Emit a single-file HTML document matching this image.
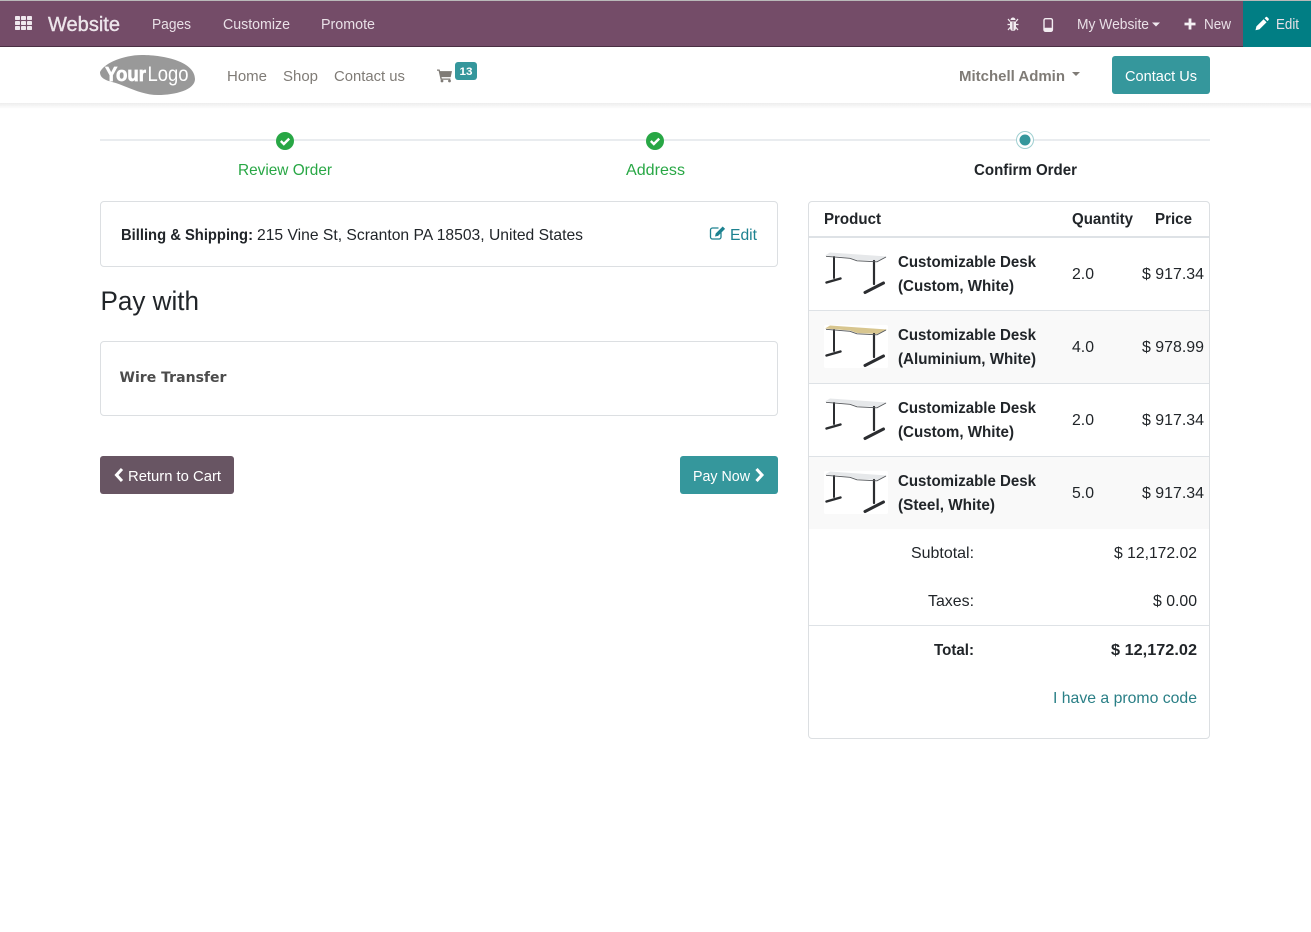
<!DOCTYPE html>
<html lang="en">
<head>
<meta charset="utf-8">
<title>Confirm Order</title>
<style>
html,body{margin:0;padding:0;background:#fff;width:1311px;height:932px;overflow:hidden}
svg{display:block}
text{font-family:"Liberation Sans",sans-serif;font-size:16px;fill:#212529}
.b{font-weight:bold}
.top{font-size:14.5px;fill:#e9e0e7}
.nav{font-size:15px;fill:#7f7b76}
.wt{fill:#fff;font-size:15px}
</style>
</head>
<body>
<svg width="1311" height="932" viewBox="0 0 1311 932" xmlns="http://www.w3.org/2000/svg">
<defs>
<linearGradient id="sh" x1="0" y1="0" x2="0" y2="1"><stop offset="0" stop-color="#000" stop-opacity=".07"/><stop offset="1" stop-color="#000" stop-opacity="0"/></linearGradient>
<g id="legs" fill="none" stroke="#2b2d30" stroke-linecap="round">
<path d="M834 257V278" stroke-width="2"/>
<path d="M826.5 282.500L840.500 278.500" stroke-width="2.400"/>
<path d="M874 261V284" stroke-width="2.200"/>
<path d="M865 292.500L883.500 283" stroke-width="3"/>
<path d="M826 256.300L850 258.300L857 260.800L877 261.800L886 257" stroke="#55585c" stroke-width=".9" stroke-linecap="butt"/>
</g>
<path id="top" d="M825 255.500L830 252.500L887 256.500L877 261L857 260L850 257.500Z"/>
</defs>

<!-- top bar -->
<rect x="0" y="0" width="1311" height="47" fill="#744c68"/>
<rect x="0" y="0" width="1311" height="1" fill="#b9b9b9"/>
<rect x="0" y="46" width="1311" height="1" fill="#4a3043"/>
<rect x="1243" y="1" width="68" height="46" fill="#017e84"/>
<g fill="#efe8ee">
<rect x="15" y="16" width="5" height="4" rx=".8"/><rect x="21" y="16" width="5" height="4" rx=".8"/><rect x="27" y="16" width="5" height="4" rx=".8"/>
<rect x="15" y="21" width="5" height="4" rx=".8"/><rect x="21" y="21" width="5" height="4" rx=".8"/><rect x="27" y="21" width="5" height="4" rx=".8"/>
<rect x="15" y="26" width="5" height="4" rx=".8"/><rect x="21" y="26" width="5" height="4" rx=".8"/><rect x="27" y="26" width="5" height="4" rx=".8"/>
</g>
<text x="48" y="31" style="font-size:20px;fill:#ece5eb;stroke:#ece5eb;stroke-width:.4" textLength="72" lengthAdjust="spacingAndGlyphs">Website</text>
<text x="152" y="29" class="top" textLength="39" lengthAdjust="spacingAndGlyphs">Pages</text>
<text x="223" y="29" class="top" textLength="67" lengthAdjust="spacingAndGlyphs">Customize</text>
<text x="321" y="29" class="top" textLength="54" lengthAdjust="spacingAndGlyphs">Promote</text>
<!-- bug -->
<g fill="#f2ecf1" stroke="#f2ecf1">
<path d="M1010 21.500h6v6.500a3 3 0 0 1-6 0z" stroke="none"/>
<path d="M1010.500 20a2.500 2.500 0 0 1 5 0z" stroke="none"/>
<path d="M1008 19l2 2.500M1018 19l-2 2.500M1007.500 24.500h2.500M1016 24.500h2.500M1008 30l2-2.500M1018 30l-2-2.500" fill="none" stroke-width="1.200"/>
</g>
<path d="M1013 22v8.500" stroke="#744c68" stroke-width=".8"/>
<!-- mobile -->
<rect x="1044" y="18.700" width="8.400" height="12.600" rx="1.600" fill="none" stroke="#f2ecf1" stroke-width="1.400"/>
<rect x="1044" y="27.800" width="8.400" height="3.400" rx="1" fill="#f2ecf1"/>
<text x="1077" y="29" class="top" textLength="72" lengthAdjust="spacingAndGlyphs">My Website</text>
<path d="M1152 22.500h8l-4 4z" fill="#efe8ee"/>
<path d="M1190 18.500v11M1184.500 24h11" stroke="#f5f0f4" stroke-width="2.800"/>
<text x="1204" y="29" class="top" textLength="27" lengthAdjust="spacingAndGlyphs">New</text>
<path d="M1255.500 30.200l.9-3.800 7.200-7.200 3 3-7.200 7.200zM1264.600 18.200l1-1a1.200 1.200 0 0 1 1.700 0l1.200 1.200a1.200 1.200 0 0 1 0 1.700l-1 1z" fill="#fff"/>
<text x="1276" y="29" class="top" textLength="23" lengthAdjust="spacingAndGlyphs">Edit</text>

<!-- navbar -->
<rect x="0" y="103" width="1311" height="6" fill="url(#sh)"/>
<path d="M100 72C105 62 125 55 142 55C165 55 195 62 195 79C195 90 175 95 158 95C140 95 125 85 112 82C105 80 100 78 100 72Z" fill="#999"/>
<text x="105" y="81" class="b" style="font-size:20px;fill:#fff;stroke:#fff;stroke-width:.7" textLength="41" lengthAdjust="spacingAndGlyphs">Your</text>
<text x="147.500" y="81" style="font-size:21px;fill:#fff" textLength="41" lengthAdjust="spacingAndGlyphs">Logo</text>
<text x="227" y="81" class="nav" textLength="40" lengthAdjust="spacingAndGlyphs">Home</text>
<text x="283" y="81" class="nav" textLength="35" lengthAdjust="spacingAndGlyphs">Shop</text>
<text x="334" y="81" class="nav" textLength="71" lengthAdjust="spacingAndGlyphs">Contact us</text>
<!-- cart -->
<path d="M437 69.500h2.600l.5 1.600h11.900l-1.300 6h-9.200l.3 1.400h8.600v1.200h-9.800l-2-8.900H437z" fill="#7f7b76"/>
<circle cx="442" cy="81" r="1.400" fill="#7f7b76"/><circle cx="449.500" cy="81" r="1.400" fill="#7f7b76"/>
<rect x="455" y="62" width="22" height="18" rx="3" fill="#35979c"/>
<text x="459.500" y="75" class="b" style="font-size:11px;fill:#fff" textLength="13" lengthAdjust="spacingAndGlyphs">13</text>
<text x="959" y="81" class="b nav" style="font-size:15px" textLength="106" lengthAdjust="spacingAndGlyphs">Mitchell Admin</text>
<path d="M1072 72h8l-4 4z" fill="#7f7b76"/>
<rect x="1112" y="56" width="98" height="38" rx="3" fill="#35979c"/>
<text x="1125" y="81" class="wt" textLength="72" lengthAdjust="spacingAndGlyphs">Contact Us</text>

<!-- steps -->
<rect x="100" y="139" width="1110" height="2" fill="#e9ecef"/>
<circle cx="285" cy="141" r="9" fill="#28a745"/>
<path d="M280.800 141l3 3 5.400-5.400" fill="none" stroke="#fff" stroke-width="2.400"/>
<circle cx="655" cy="141" r="9" fill="#28a745"/>
<path d="M650.800 141l3 3 5.400-5.400" fill="none" stroke="#fff" stroke-width="2.400"/>
<circle cx="1025" cy="140" r="8.500" fill="#fff" stroke="#9fcfd1" stroke-width="1"/>
<circle cx="1025" cy="140" r="5.500" fill="#35979c"/>
<text x="238" y="175" style="fill:#28a745" textLength="94" lengthAdjust="spacingAndGlyphs">Review Order</text>
<text x="626" y="175" style="fill:#28a745" textLength="59" lengthAdjust="spacingAndGlyphs">Address</text>
<text x="974" y="175" class="b" textLength="103" lengthAdjust="spacingAndGlyphs">Confirm Order</text>

<!-- billing card -->
<rect x="100.500" y="201.500" width="677" height="65" rx="3.500" fill="#fff" stroke="#dcdfe2"/>
<text x="121" y="240" class="b" textLength="132" lengthAdjust="spacingAndGlyphs">Billing &amp; Shipping:</text>
<text x="257" y="240" textLength="326" lengthAdjust="spacingAndGlyphs">215 Vine St, Scranton PA 18503, United States</text>
<g fill="none" stroke="#1d8290" stroke-width="1.300">
<path d="M721 232.500v4.500a2 2 0 0 1-2 2h-6.500a2 2 0 0 1-2-2v-7a2 2 0 0 1 2-2h6"/>
</g>
<path d="M715 236.500l.7-3 7-7 2.400 2.400-7 7z" fill="#1d8290"/>
<text x="730" y="240" style="fill:#1d8290" textLength="27" lengthAdjust="spacingAndGlyphs">Edit</text>

<text x="100.500" y="310" style="font-size:27px" textLength="98.500" lengthAdjust="spacingAndGlyphs">Pay with</text>

<rect x="100.500" y="341.500" width="677" height="74" rx="3.500" fill="#fff" stroke="#dcdfe2"/>
<text x="119.500" y="382" style="font-family:'DejaVu Sans',sans-serif;font-weight:bold;font-size:14.400px;fill:#4c4c4c" textLength="107" lengthAdjust="spacingAndGlyphs">Wire Transfer</text>

<rect x="100" y="456" width="134" height="38" rx="3" fill="#685563"/>
<path d="M122 469l-5.500 6 5.500 6" fill="none" stroke="#fff" stroke-width="3"/>
<text x="128" y="481" class="wt" textLength="93" lengthAdjust="spacingAndGlyphs">Return to Cart</text>
<rect x="680" y="456" width="98" height="38" rx="3" fill="#35979c"/>
<text x="693" y="481" class="wt" textLength="57" lengthAdjust="spacingAndGlyphs">Pay Now</text>
<path d="M756.500 469l5.500 6-5.500 6" fill="none" stroke="#fff" stroke-width="3"/>

<!-- order table -->
<rect x="808.500" y="201.500" width="401" height="537" rx="3.500" fill="#fff" stroke="#dcdfe2"/>
<text x="824" y="224" class="b" textLength="57" lengthAdjust="spacingAndGlyphs">Product</text>
<text x="1072" y="224" class="b" textLength="61" lengthAdjust="spacingAndGlyphs">Quantity</text>
<text x="1155" y="224" class="b" textLength="37" lengthAdjust="spacingAndGlyphs">Price</text>
<rect x="809" y="236" width="400" height="2" fill="#dee2e6"/>
<rect x="809" y="311" width="400" height="72" fill="#f9f9f9"/>
<rect x="809" y="457" width="400" height="72" fill="#f9f9f9"/>
<rect x="809" y="310" width="400" height="1" fill="#dee2e6"/>
<rect x="809" y="383" width="400" height="1" fill="#dee2e6"/>
<rect x="809" y="456" width="400" height="1" fill="#dee2e6"/>

<!-- row 1 -->
<use href="#top" fill="#e6e8ea"/><use href="#legs"/>
<text x="898" y="267" class="b" textLength="138" lengthAdjust="spacingAndGlyphs">Customizable Desk</text>
<text x="898" y="291" class="b" textLength="116" lengthAdjust="spacingAndGlyphs">(Custom, White)</text>
<text x="1072" y="279" textLength="22" lengthAdjust="spacingAndGlyphs">2.0</text>
<text x="1142" y="279" textLength="62" lengthAdjust="spacingAndGlyphs">$ 917.34</text>
<!-- row 2 -->
<rect x="824" y="325" width="64" height="43" rx="2" fill="#fff"/>
<g transform="translate(0 73)"><use href="#top" fill="#d8c68f"/><use href="#legs"/></g>
<text x="898" y="340" class="b" textLength="138" lengthAdjust="spacingAndGlyphs">Customizable Desk</text>
<text x="898" y="364" class="b" textLength="138" lengthAdjust="spacingAndGlyphs">(Aluminium, White)</text>
<text x="1072" y="352" textLength="22" lengthAdjust="spacingAndGlyphs">4.0</text>
<text x="1142" y="352" textLength="62" lengthAdjust="spacingAndGlyphs">$ 978.99</text>
<!-- row 3 -->
<g transform="translate(0 146)"><use href="#top" fill="#e6e8ea"/><use href="#legs"/></g>
<text x="898" y="413" class="b" textLength="138" lengthAdjust="spacingAndGlyphs">Customizable Desk</text>
<text x="898" y="437" class="b" textLength="116" lengthAdjust="spacingAndGlyphs">(Custom, White)</text>
<text x="1072" y="425" textLength="22" lengthAdjust="spacingAndGlyphs">2.0</text>
<text x="1142" y="425" textLength="62" lengthAdjust="spacingAndGlyphs">$ 917.34</text>
<!-- row 4 -->
<rect x="824" y="471" width="64" height="43" rx="2" fill="#fff"/>
<g transform="translate(0 219)"><use href="#top" fill="#e6e8ea"/><use href="#legs"/></g>
<text x="898" y="486" class="b" textLength="138" lengthAdjust="spacingAndGlyphs">Customizable Desk</text>
<text x="898" y="510" class="b" textLength="97" lengthAdjust="spacingAndGlyphs">(Steel, White)</text>
<text x="1072" y="498" textLength="22" lengthAdjust="spacingAndGlyphs">5.0</text>
<text x="1142" y="498" textLength="62" lengthAdjust="spacingAndGlyphs">$ 917.34</text>

<!-- totals -->
<text x="911" y="558" textLength="63" lengthAdjust="spacingAndGlyphs">Subtotal:</text>
<text x="1114" y="558" textLength="83" lengthAdjust="spacingAndGlyphs">$ 12,172.02</text>
<text x="928" y="606" textLength="46" lengthAdjust="spacingAndGlyphs">Taxes:</text>
<text x="1153" y="606" textLength="44" lengthAdjust="spacingAndGlyphs">$ 0.00</text>
<rect x="809" y="625" width="400" height="1" fill="#dee2e6"/>
<text x="934" y="655" class="b" textLength="40" lengthAdjust="spacingAndGlyphs">Total:</text>
<text x="1111" y="655" class="b" textLength="86" lengthAdjust="spacingAndGlyphs">$ 12,172.02</text>
<text x="1053" y="703" style="fill:#2a7f86" textLength="144" lengthAdjust="spacingAndGlyphs">I have a promo code</text>
</svg>
</body>
</html>
